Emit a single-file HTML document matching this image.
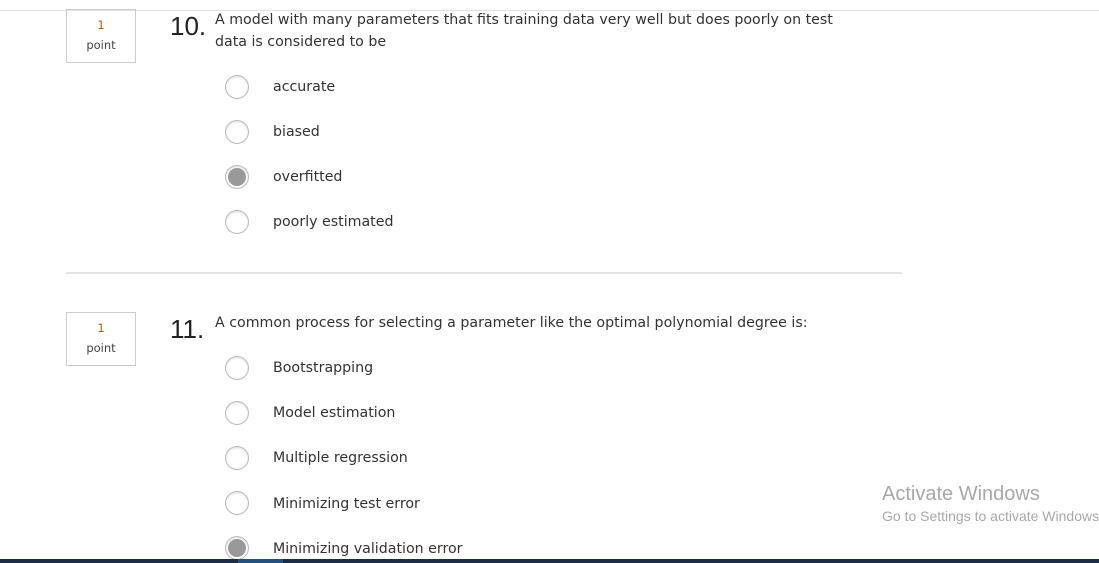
<!DOCTYPE html><html><head><style>
body{margin:0;width:1099px;height:563px;background:#fff;position:relative;overflow:hidden;font-family:"DejaVu Sans",sans-serif;color:#333}
.a{position:absolute}
.box{position:absolute;left:66px;width:68px;height:47px;padding-top:5px;border:1px solid #ccc;text-align:center;font-size:11.5px;line-height:20px;color:#444;box-sizing:content-box}
.box span{color:#c06000}
.num{position:absolute;left:170px;font-family:"Liberation Sans",sans-serif;font-size:26px;color:#222;line-height:26px}
.q{position:absolute;left:215px;font-size:14.2px;line-height:22px;color:#333;white-space:nowrap}
.r{position:absolute;left:225px;width:22px;height:22px;border:1px solid #bbb;border-radius:50%;box-shadow:inset 0 1px 2px #ddd;background:#fff}
.r.s::after{content:"";position:absolute;left:2px;top:2px;width:18px;height:18px;border-radius:50%;background:#999}
.t{position:absolute;left:273px;font-size:14.2px;color:#333;line-height:20px}
</style></head><body>
<div class="a" style="left:0;top:10px;width:1099px;height:1px;background:#e2e2e2"></div>
<div class="box" style="top:9px"><span>1</span><br>point</div>
<div class="num" style="top:13px">10.</div>
<div class="q" style="top:9px">A model with many parameters that fits training data very well but does poorly on test<br>data is considered to be</div>
<div class="r" style="top:75px"></div><div class="t" style="top:77px">accurate</div>
<div class="r" style="top:120px"></div><div class="t" style="top:122px">biased</div>
<div class="r s" style="top:165px"></div><div class="t" style="top:167px">overfitted</div>
<div class="r" style="top:210px"></div><div class="t" style="top:212px">poorly estimated</div>
<div class="a" style="left:66px;top:272px;width:836px;height:2px;background:#e4e4e4"></div>
<div class="box" style="top:312px"><span>1</span><br>point</div>
<div class="num" style="top:316px">11.</div>
<div class="q" style="top:312px">A common process for selecting a parameter like the optimal polynomial degree is:</div>
<div class="r" style="top:356px"></div><div class="t" style="top:358px">Bootstrapping</div>
<div class="r" style="top:401px"></div><div class="t" style="top:403px">Model estimation</div>
<div class="r" style="top:446px"></div><div class="t" style="top:448px">Multiple regression</div>
<div class="r" style="top:491px"></div><div class="t" style="top:494px">Minimizing test error</div>
<div class="r s" style="top:536px"></div><div class="t" style="top:539px">Minimizing validation error</div>
<div class="a" style="left:882px;top:483px;font-family:'Liberation Sans',sans-serif;font-size:20px;color:#a8a8a8;white-space:nowrap">Activate Windows</div>
<div class="a" style="left:882px;top:508px;font-family:'Liberation Sans',sans-serif;font-size:14px;color:#a8a8a8;white-space:nowrap">Go to Settings to activate Windows.</div>
<div class="a" style="left:0;top:559px;width:1099px;height:4px;background:#1b2c44"></div>
<div class="a" style="left:238px;top:559px;width:45px;height:4px;background:#24507e"></div>
</body></html>
